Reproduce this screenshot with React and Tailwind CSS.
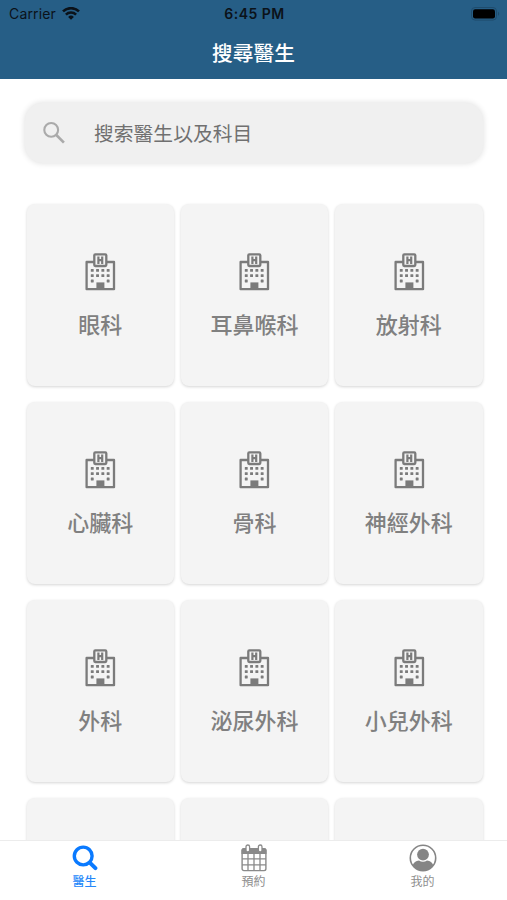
const departments = [
  "眼科", "耳鼻喉科", "放射科",
  "心臟科", "骨科", "神經外科",
  "外科", "泌尿外科", "小兒外科",
];

function HospitalIcon() {
  return (
    <svg width="32" height="38" viewBox="0 0 32 38" fill="#7b7b7b">
      <path d="M10 9H2.6V36.2H30V9H22.6" fill="none" stroke="#7b7b7b" strokeWidth="2.3" strokeLinejoin="round" />
      <rect x="10.3" y="1.4" width="12" height="11.6" rx="1" fill="none" stroke="#7b7b7b" strokeWidth="2.3" />
      <path d="M13.300 3.400h2.200v2.500h1.600V3.400h2.200v7.600h-2.200V8.300h-1.600v2.700h-2.200z" />
      {[15.9, 21.2, 26.6].map((y, row) =>
        [6.8, 12.1, 17.4, 22.7]
          .filter((x, col) => row < 2 || col == 0 || col == 3)
          .map((x) => <rect key={`${x}-${y}`} x={x} y={y} width="2.9" height="2.9" rx="0.4" />)
      )}
      <path d="M12.4 29.4h8V36h-8z" />
    </svg>
  );
}

function WifiIcon() {
  return (
    <svg width="18" height="13" viewBox="0 0 18 13" fill="none" stroke="#0b1219" strokeWidth="2.6">
      <path d="M1 4.4A11.5 11.5 0 0 1 17 4.4" />
      <path d="M3.9 7.6A7.4 7.4 0 0 1 14.1 7.6" />
      <path d="M9 12.8L6.1 9.9A4.1 4.1 0 0 1 11.9 9.9z" fill="#0b1219" stroke="none" />
    </svg>
  );
}

function BatteryIcon() {
  return (
    <svg width="29" height="14" viewBox="0 0 29 14">
      <rect x="0.5" y="0.5" width="25" height="12.6" rx="3.6" fill="none" stroke="#1f4c6d" />
      <rect x="2" y="2.2" width="22" height="9.2" rx="2.2" fill="#000" />
      <path d="M27 4.8c1.6.6 1.6 3.4 0 4z" fill="#1f4c6d" />
    </svg>
  );
}

function SearchTabIcon() {
  return (
    <svg width="26" height="26" viewBox="0 0 26 26" fill="none" stroke="#0a7aff">
      <circle cx="11.2" cy="11" r="8.9" strokeWidth="3.4" />
      <path d="M17.8 17.6l5.6 5.5" strokeWidth="4" strokeLinecap="round" />
    </svg>
  );
}

function CalendarIcon() {
  return (
    <svg width="26" height="28" viewBox="0 0 26 28" fill="none" stroke="#8a8a8a">
      <path d="M.5 6.2a2 2 0 0 1 2-2h21a2 2 0 0 1 2 2V10H.5z" fill="#8a8a8a" stroke="none" />
      <rect x="1.1" y="4.8" width="23.8" height="21.8" rx="1.8" strokeWidth="1.4" />
      <path d="M7 10v16.6M13 10v16.6M19 10v16.6M1 14.8h24M1 20.8h24" strokeWidth="1.3" />
      <rect x="5" y="1" width="3.6" height="7" rx="1.8" fill="#fff" strokeWidth="1.3" />
      <rect x="17.4" y="1" width="3.6" height="7" rx="1.8" fill="#fff" strokeWidth="1.3" />
    </svg>
  );
}

function ProfileIcon() {
  return (
    <svg width="28" height="28" viewBox="0 0 28 28">
      <circle cx="14" cy="14" r="12.7" fill="none" stroke="#858585" strokeWidth="1.6" />
      <circle cx="14" cy="10.6" r="5.9" fill="#858585" />
      <path d="M3.6 21.4c1-3 3.2-4.6 6.400-5 2.400 1.700 5.600 1.700 8 0 3.200.4 5.400 2 6.400 5A12.700 12.700 0 0 1 3.600 21.400z" fill="#858585" />
    </svg>
  );
}

function Tab({ icon, label, active }) {
  return (
    <button type="button" className={`flex flex-col items-center pt-[2px] text-[12px] leading-4 ${active ? 'font-medium text-[#2588fa]' : 'text-[#8e8e8e]'}`}>
      <span className="flex h-[29px] items-center">{icon}</span>
      <span className="mt-[2px]">{label}</span>
    </button>
  );
}

function Card({ name }) {
  return (
    <div className="flex h-[182px] flex-col items-center rounded-[8px] bg-[#f4f4f4] pt-[49px] shadow-[0_1px_3px_rgba(0,0,0,0.17)]">
      {name && <HospitalIcon />}
      {name && <span className="mt-[18px] text-[22px] font-medium leading-8 text-[#808080]">{name}</span>}
    </div>
  );
}

export default function App() {
  return (
    <div className="flex h-[900px] w-[507px] flex-col overflow-hidden bg-white font-['Inter','Noto_Sans_CJK_TC',sans-serif]">
      <header className="h-[79px] shrink-0 bg-[#265e86]">
        <div className="grid h-7 grid-cols-3 items-center pl-[9px] pr-[7px] text-[14px] text-[#0b1219]">
          <div className="flex items-center gap-[6px] pb-px">
            <span className="tracking-[0.15px]">Carrier</span>
            <WifiIcon />
          </div>
          <span className="pb-px text-center font-semibold tracking-[0.5px] whitespace-nowrap">6:45 PM</span>
          <div className="flex justify-end pb-px"><BatteryIcon /></div>
        </div>
        <h1 className="text-center text-[20.7px] font-medium leading-[51px] text-white">搜尋醫生</h1>
      </header>

      <main className="min-h-0 flex-1 overflow-hidden pt-6">
        <div className="ml-[25px] mr-[24px] flex h-[60px] items-center rounded-[18px] bg-[#f0f0f0] pl-[18px] shadow-[0_0_6px_rgba(0,0,0,0.14)]">
          <svg width="24" height="24" viewBox="0 0 24 24" fill="none" stroke="#aaaaaa">
            <circle cx="8.2" cy="8.9" r="6.9" strokeWidth="2.1" />
            <path d="M13.1 13.8l7.800 7.800" strokeWidth="2.700" />
          </svg>
          <span className="ml-[27px] pt-[3px] text-[19.8px] text-[#707070]">搜索醫生以及科目</span>
        </div>

        <div className="mt-[41px] grid grid-cols-3 gap-x-[6.5px] gap-y-4 pl-[26.5px] pr-[24.5px]">
          {departments.map((name) => <Card key={name} name={name} />)}
          <Card />
          <Card />
          <Card />
        </div>
      </main>

      <nav className="grid h-[60px] shrink-0 grid-cols-3 items-start border-t border-[#ececec] bg-white">
        <Tab icon={<SearchTabIcon />} label="醫生" active />
        <Tab icon={<CalendarIcon />} label="預約" />
        <Tab icon={<ProfileIcon />} label="我的" />
      </nav>
    </div>
  );
}
